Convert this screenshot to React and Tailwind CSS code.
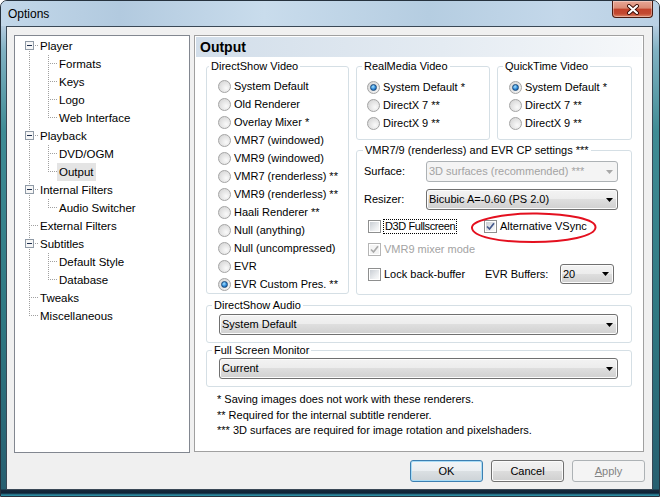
import React from "react";

const tree = [
  { label: "Player", level: 0, box: true },
  { label: "Formats", level: 1 },
  { label: "Keys", level: 1 },
  { label: "Logo", level: 1 },
  { label: "Web Interface", level: 1, last: true },
  { label: "Playback", level: 0, box: true },
  { label: "DVD/OGM", level: 1 },
  { label: "Output", level: 1, last: true, selected: true },
  { label: "Internal Filters", level: 0, box: true },
  { label: "Audio Switcher", level: 1, last: true },
  { label: "External Filters", level: 0 },
  { label: "Subtitles", level: 0, box: true },
  { label: "Default Style", level: 1 },
  { label: "Database", level: 1, last: true },
  { label: "Tweaks", level: 0 },
  { label: "Miscellaneous", level: 0 },
];

const dot = { stroke: "#a0a0a0", strokeWidth: 1, strokeDasharray: "1 1" };

function Gutter({ item, index, total }) {
  const isFirst = index === 0;
  const isLast = index === total - 1;
  const w = item.level === 0 ? 23 : 42;
  return (
    <svg width={w} height="18" viewBox={`0 0 ${w} 18`} shapeRendering="crispEdges" className="shrink-0">
      {item.level === 0 && item.box && !isFirst && <line x1="14.5" y1="0" x2="14.5" y2="4" {...dot} />}
      {item.level === 0 && item.box && !isLast && <line x1="14.5" y1="14" x2="14.5" y2="18" {...dot} />}
      {item.level === 0 && !item.box && <line x1="14.5" y1="0" x2="14.5" y2={isLast ? 10 : 18} {...dot} />}
      {item.level === 1 && <line x1="14.5" y1="0" x2="14.5" y2="18" {...dot} />}
      {item.level === 0 && item.box && (
        <>
          <rect x="10.5" y="4.5" width="8" height="8" fill="#f6f6f6" stroke="#8f9aa6" />
          <line x1="12" y1="8.5" x2="17" y2="8.5" stroke="#1e2f4e" />
          <line x1="20" y1="8.5" x2="23" y2="8.5" {...dot} />
        </>
      )}
      {item.level === 0 && !item.box && <line x1="16" y1="8.5" x2="23" y2="8.5" {...dot} />}
      {item.level === 1 && (
        <>
          <line x1="33.5" y1="0" x2="33.5" y2={item.last ? 10 : 18} {...dot} />
          <line x1="35" y1="8.5" x2="42" y2="8.5" {...dot} />
        </>
      )}
    </svg>
  );
}

function Radio({ checked, children }) {
  return (
    <div className="flex items-center h-[18px]">
      <span className="w-[13px] h-[13px] shrink-0 rounded-full border border-[#a4a4a4] bg-[radial-gradient(circle_at_65%_65%,#fafafa,#dedede_65%,#cdcdcd)] flex items-center justify-center">
        {checked && (
          <span className="w-[7px] h-[7px] rounded-full border border-[#1a4a7a] bg-[radial-gradient(circle_at_40%_35%,#a8e4ff,#2b86d8_55%,#0f4683)]" />
        )}
      </span>
      <span className="ml-[3px] whitespace-nowrap">{children}</span>
    </div>
  );
}

function Check({ checked, disabled }) {
  return (
    <span className={disabled ? "w-[13px] h-[13px] shrink-0 border border-[#b5b5b5] bg-white p-[1px] flex" : "w-[13px] h-[13px] shrink-0 border border-[#8e8f8f] bg-white p-[1px] flex"}>
      <span className={disabled ? "flex-1 bg-[#f4f4f4] flex items-center justify-center" : "flex-1 bg-[linear-gradient(135deg,#c9ced4,#eef0f2_70%,#fafafa)] flex items-center justify-center"}>
        {checked && (
          <svg width="9" height="9" viewBox="0 0 9 9">
            <path d="M1 4.5L3.5 7L8 1.2" fill="none" stroke={disabled ? "#a9a9a9" : "#44598c"} strokeWidth="1.7" />
          </svg>
        )}
      </span>
    </span>
  );
}

function Arrow({ disabled }) {
  return (
    <svg width="7" height="4" viewBox="0 0 7 4" className="shrink-0">
      <path d="M0 0H7L3.5 4Z" fill={disabled ? "#a8a8a8" : "#000"} />
    </svg>
  );
}

function Combo({ children, className }) {
  return (
    <div className={"border border-[#707070] rounded-[3px] bg-[linear-gradient(#f3f3f3,#ececec_50%,#dedede_50%,#d0d0d0)] shadow-[inset_0_0_0_1px_#fcfcfc] flex items-center pl-[2px] pr-[4px] " + className}>
      <span className="flex-1 whitespace-nowrap">{children}</span>
      <Arrow />
    </div>
  );
}

function Group({ title, className, legendClass, children }) {
  return (
    <fieldset className={"border border-[#d5dfe5] rounded-[3px] min-w-0 shrink-0 " + className}>
      <legend className={legendClass || "ml-[5px] px-[2px] text-[11px] leading-[13px]"}>{title}</legend>
      {children}
    </fieldset>
  );
}

export default function App() {
  return (
    <div className="w-[660px] h-[497px] flex flex-col rounded-t-[7px] border border-[#26323e] overflow-hidden text-[11px] leading-[13px] text-black font-['Liberation_Sans',Arial,sans-serif] bg-[linear-gradient(to_bottom,#c4d8e9_0px,#b3cbdf_26px,#80b1c2_50px,#3f8c95_130px,#2f7882_320px,#275f70_488px,#142a3d_489px,#0f2236_492px,#2b8aa0_494px)]">
      {/* Title bar */}
      <div className="h-[25px] shrink-0 flex items-start bg-[linear-gradient(to_right,#c2d7e9,#b2cadf_18%,#c9dcec_40%,#b5cde1_65%,#c4d8ea_85%,#b9d0e4)]">
        <span className="ml-[7px] mt-[6px] text-[12px] leading-[14px]">Options</span>
        <div className="ml-auto mr-[6px] w-[41px] h-[17px] rounded-b-[4px] border border-t-0 border-[#4a1a10] bg-[linear-gradient(#e8a796,#d98a74_45%,#c2422a_50%,#c34a31_80%,#e08a6c)] shadow-[inset_0_0_0_1px_rgba(255,255,255,0.35)] flex items-center justify-center">
          <svg width="14" height="11" viewBox="0 0 14 11">
            <path d="M3 2L11 9M11 2L3 9" stroke="#3a0c05" strokeWidth="4" strokeLinecap="round" />
            <path d="M3 2L11 9M11 2L3 9" stroke="#fff" strokeWidth="2.2" strokeLinecap="round" />
          </svg>
        </div>
      </div>

      <div className="flex-1 flex pl-[5px] pr-[6px] pb-[6px]">
        <div className="flex-1 flex flex-col border border-[#3a4856] bg-[#f0f0f0] px-[7px] pt-[8px]">
          <div className="flex gap-[4px] items-start">
            {/* Tree */}
            <div className="w-[176px] h-[418px] shrink-0 border border-[#828790] bg-white pt-[1px] text-[11.5px]">
              {tree.map((item, i) => (
                <div key={item.label} className="flex items-center h-[18px]">
                  <Gutter item={item} index={i} total={tree.length} />
                  <span className={item.selected ? "px-[2px] leading-[18px] bg-[#e4e4e4] whitespace-nowrap" : "px-[2px] leading-[18px] whitespace-nowrap"}>{item.label}</span>
                </div>
              ))}
            </div>

            {/* Page */}
            <div className="w-[450px] h-[417px] shrink-0 border border-[#a0a0a0] bg-white p-[1px] flex flex-col">
              <div className="h-[20px] shrink-0 pl-[4px] bg-[linear-gradient(to_right,#d2deea,#e4ebf2_55%,#f6f8fa)] text-[14px] leading-[20px] font-bold">Output</div>

              <div className="pl-[10px] pt-[3px] flex flex-col">
                <div className="flex gap-[7px] items-start">
                  <Group title="DirectShow Video" className="w-[143px] h-[234px]" legendClass="ml-[2px] px-[2px] text-[11px] leading-[13px]">
                    <div className="pt-[4px] pl-[11px]">
                      <Radio>System Default</Radio>
                      <Radio>Old Renderer</Radio>
                      <Radio>Overlay Mixer *</Radio>
                      <Radio>VMR7 (windowed)</Radio>
                      <Radio>VMR9 (windowed)</Radio>
                      <Radio>VMR7 (renderless) **</Radio>
                      <Radio>VMR9 (renderless) **</Radio>
                      <Radio>Haali Renderer **</Radio>
                      <Radio>Null (anything)</Radio>
                      <Radio>Null (uncompressed)</Radio>
                      <Radio>EVR</Radio>
                      <Radio checked>EVR Custom Pres. **</Radio>
                    </div>
                  </Group>

                  <div className="w-[276px] flex flex-col">
                    <div className="flex gap-[7px]">
                      <Group title="RealMedia Video" className="w-[134px] h-[80px]">
                        <div className="pt-[5px] pl-[10px]">
                          <Radio checked>System Default *</Radio>
                          <Radio>DirectX 7 **</Radio>
                          <Radio>DirectX 9 **</Radio>
                        </div>
                      </Group>
                      <Group title="QuickTime Video" className="w-[135px] h-[80px]">
                        <div className="pt-[5px] pl-[11px]">
                          <Radio checked>System Default *</Radio>
                          <Radio>DirectX 7 **</Radio>
                          <Radio>DirectX 9 **</Radio>
                        </div>
                      </Group>
                    </div>

                    <Group title="VMR7/9 (renderless) and EVR CP settings ***" className="w-[276px] h-[151px] mt-[4px]" legendClass="ml-[6px] px-[2px] text-[11px] leading-[13px]">
                      <div className="flex flex-col">
                        <div className="flex items-center h-[21px] mt-[4px] pl-[7px]">
                          <span className="w-[62px] shrink-0">Surface:</span>
                          <div className="w-[192px] h-[21px] border border-[#adb2b5] rounded-[3px] bg-[#f4f4f4] flex items-center pl-[2px] pr-[4px] text-[#a3a3a3]">
                            <span className="flex-1 whitespace-nowrap">3D surfaces (recommended) ***</span>
                            <Arrow disabled />
                          </div>
                        </div>
                        <div className="flex items-center h-[21px] mt-[7px] pl-[7px]">
                          <span className="w-[62px] shrink-0">Resizer:</span>
                          <Combo className="w-[192px] h-[21px]">Bicubic A=-0.60 (PS 2.0)</Combo>
                        </div>
                        <div className="relative flex items-center h-[16px] mt-[8px] pl-[11px]">
                          <div className="w-[116px] shrink-0 flex items-center">
                            <Check />
                            <span className="ml-[2px] border border-dotted border-black leading-[13px] px-[1px] tracking-[-0.4px] whitespace-nowrap">D3D Fullscreen</span>
                          </div>
                          <Check checked />
                          <span className="ml-[3px] whitespace-nowrap">Alternative VSync</span>
                          <svg className="absolute left-[112px] top-[-7px]" width="129" height="33" viewBox="0 0 129 33">
                            <path d="M3 17C2 8 40 2 68 2.5C100 3 127 8 126.5 16.5C126 25 98 31 64 31C30 31 4 26 3 17Z" fill="none" stroke="#e4101f" strokeWidth="2" />
                          </svg>
                        </div>
                        <div className="flex items-center h-[16px] mt-[7px] pl-[11px]">
                          <Check checked disabled />
                          <span className="ml-[3px] text-[#a3a3a3] whitespace-nowrap">VMR9 mixer mode</span>
                        </div>
                        <div className="flex items-center h-[20px] mt-[7px] pl-[11px]">
                          <div className="w-[116px] shrink-0 flex items-center">
                            <Check />
                            <span className="ml-[3px] whitespace-nowrap">Lock back-buffer</span>
                          </div>
                          <span className="w-[76px] shrink-0 pl-[1px] whitespace-nowrap">EVR Buffers:</span>
                          <Combo className="w-[54px] h-[20px]">20</Combo>
                        </div>
                      </div>
                    </Group>
                  </div>
                </div>

                <Group title="DirectShow Audio" className="w-[426px] h-[44px] mt-[4px]">
                  <Combo className="ml-[12px] mt-[2px] w-[399px] h-[21px]">System Default</Combo>
                </Group>

                <Group title="Full Screen Monitor" className="w-[426px] h-[43px] mt-[1px]">
                  <Combo className="ml-[12px] mt-[1px] w-[399px] h-[21px]">Current</Combo>
                </Group>

                <div className="mt-[5px] pl-[11px] leading-[15.5px]">
                  <div>* Saving images does not work with these renderers.</div>
                  <div>** Required for the internal subtitle renderer.</div>
                  <div>*** 3D surfaces are required for image rotation and pixelshaders.</div>
                </div>
              </div>
            </div>
          </div>

          {/* Buttons */}
          <div className="flex justify-end gap-[8px] mt-[7px]">
            <button className="w-[73px] h-[22px] rounded-[3px] border border-[#3c7fb1] bg-[linear-gradient(#f2f5f7,#eaeef1_50%,#dbe0e3_50%,#cdd3d7)] shadow-[inset_0_0_0_1px_#a9dcf6] text-[11px]">OK</button>
            <button className="w-[73px] h-[22px] rounded-[3px] border border-[#707070] bg-[linear-gradient(#f2f2f2,#ebebeb_50%,#dddddd_50%,#cfcfcf)] shadow-[inset_0_0_0_1px_#fbfbfb] text-[11px]">Cancel</button>
            <button className="w-[73px] h-[22px] rounded-[3px] border border-[#adb2b5] bg-[#f4f4f4] text-[11px] text-[#838383]"><span className="underline">A</span>pply</button>
          </div>
        </div>
      </div>
    </div>
  );
}
